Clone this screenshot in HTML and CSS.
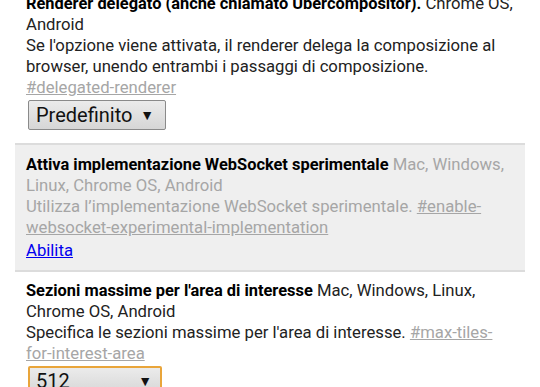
FILE: index.html
```html
<!DOCTYPE html>
<html lang="it">
<head>
    <meta charset="UTF-8">
    <meta name="viewport" content="width=device-width, initial-scale=1.0">
    <title>Flag</title>
    <link rel="stylesheet" href="styles.css">
</head>
<body>
    <div class="experiments">
        <div class="experiment first">
            <div class="experiment-text">
                <span class="experiment-name">Renderer delegato (anche chiamato Ubercompositor).</span>
                <span class="platforms">Chrome OS, Android</span>
                <div class="description">Se l'opzione viene attivata, il renderer delega la composizione al browser, unendo entrambi i passaggi di composizione.
                    <a class="permalink" href="#delegated-renderer">#delegated-renderer</a>
                </div>
            </div>
            <div class="select">
                <span>Predefinito</span>
                <span class="arrow">▼</span>
            </div>
        </div>

        <div class="experiment disabled">
            <div class="experiment-text">
                <span class="experiment-name">Attiva implementazione WebSocket sperimentale</span>
                <span class="platforms">Mac, Windows, Linux, Chrome OS, Android</span>
                <div class="description">Utilizza l’implementazione WebSocket sperimentale. <a class="permalink" href="#enable-websocket-experimental-implementation">#enable-websocket-experimental-implementation</a></div>
            </div>
            <div class="experiment-actions">
                <a class="enable-link" href="#">Abilita</a>
            </div>
        </div>

        <div class="experiment">
            <div class="experiment-text">
                <span class="experiment-name">Sezioni massime per l'area di interesse</span>
                <span class="platforms">Mac, Windows, Linux, Chrome OS, Android</span>
                <div class="description">Specifica le sezioni massime per l'area di interesse. <a class="permalink" href="#max-tiles-for-interest-area">#max-tiles-for-interest-area</a></div>
            </div>
            <div class="select focused">
                <span>512</span>
                <span class="arrow">▼</span>
            </div>
        </div>
    </div>
</body>
</html>
```

FILE: styles.css
```css
body {
    font-family: Roboto, 'Noto Sans', sans-serif;
    font-size: 16.7px;
    line-height: 21px;
    color: #222;
    margin: 0;
    padding: 0 15px;
    background: white;
    overflow: hidden;
}
.experiments {
    margin-top: -15px;
}
.experiment {
    border-top: 2px solid #dcdcdc;
    padding: 8px 11px 9px;
}
.experiment.first {
    border-top: none;
    padding-bottom: 13px;
}
.experiment.disabled {
    background-color: #efefef;
    padding-top: 9px;
}
.experiment-name {
    font-weight: bold;
    font-size: 16.4px;
    color: #000;
}
.disabled .platforms,
.disabled .description {
    color: #a6a6a6;
}
.permalink {
    color: #a6a6a6;
}
.experiment-actions {
    margin-top: 2px;
}
.enable-link {
    color: #0000ee;
}
.select {
    display: inline-flex;
    align-items: center;
    justify-content: space-between;
    box-sizing: border-box;
    width: 138px;
    height: 30px;
    margin: 2px 0 0 2px;
    padding: 0 11px 0 7px;
    font-size: 20px;
    color: #111;
    background: linear-gradient(#ebebeb, #d6d6d6);
    border: 1px solid #8a8a8a;
    border-radius: 2px;
}
.select .arrow {
    font-size: 14px;
}
.select.focused {
    width: 134px;
    border: 2px solid #e9a53a;
    padding-left: 6px;
    padding-right: 8px;
}
```
